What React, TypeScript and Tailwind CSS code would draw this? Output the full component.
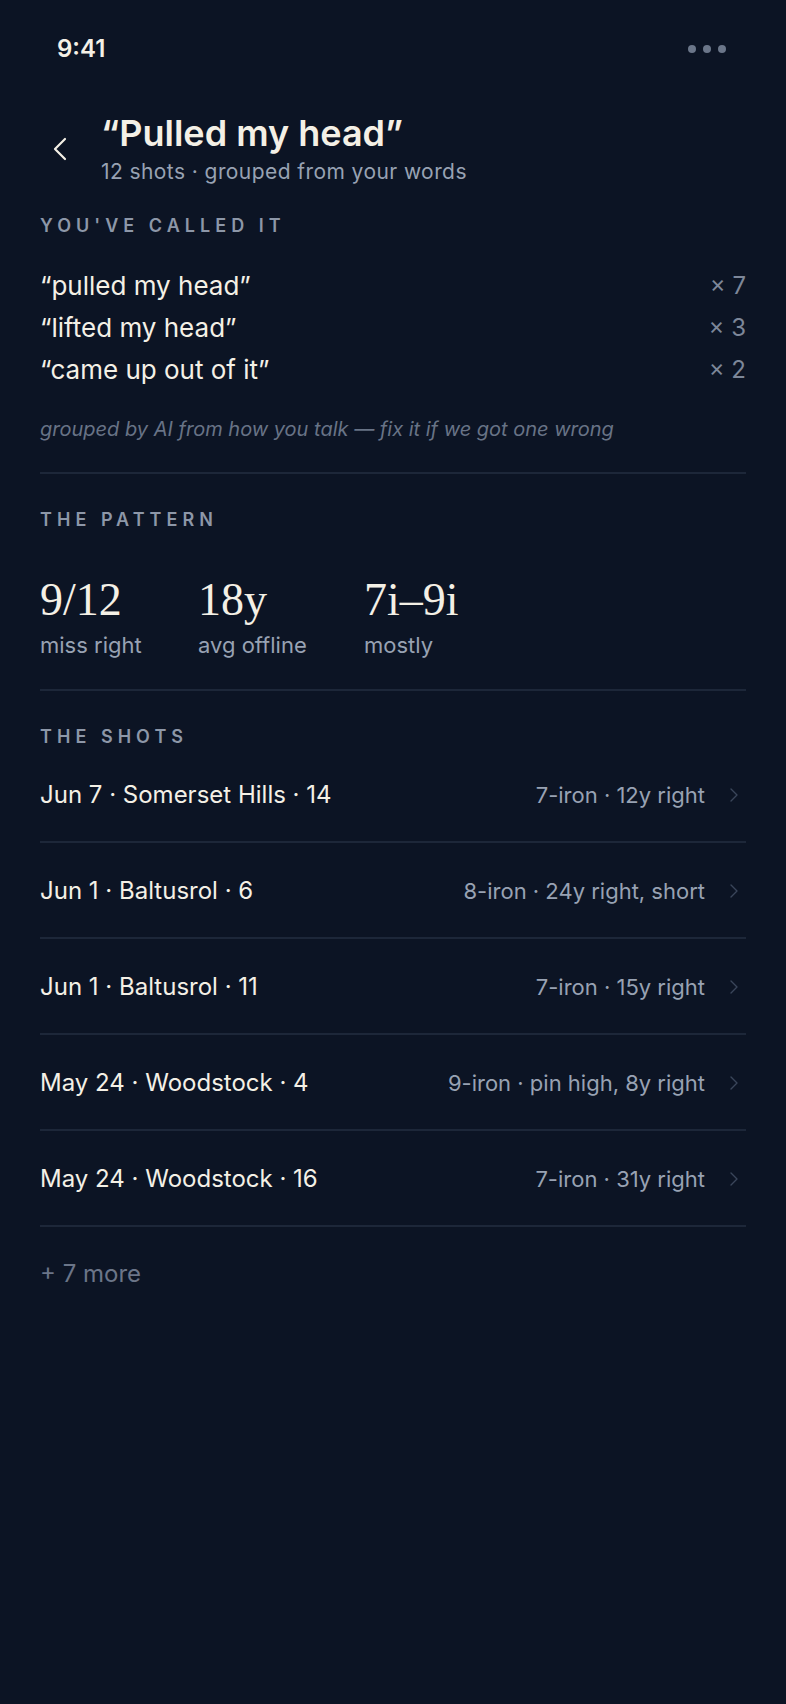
import React from "react";

const sans = "font-['Inter','Noto_Sans',sans-serif]";

const phrases = [
  { text: "“pulled my head”", count: "× 7" },
  { text: "“lifted my head”", count: "× 3" },
  { text: "“came up out of it”", count: "× 2" },
];

const stats = [
  { value: "9/12", label: "miss right", w: "w-[158px]" },
  { value: "18y", label: "avg offline", w: "w-[166px]" },
  { value: "7i–9i", label: "mostly", w: "" },
];

const shots = [
  { where: "Jun 7 · Somerset Hills · 14", what: "7-iron · 12y right" },
  { where: "Jun 1 · Baltusrol · 6", what: "8-iron · 24y right, short" },
  { where: "Jun 1 · Baltusrol · 11", what: "7-iron · 15y right" },
  { where: "May 24 · Woodstock · 4", what: "9-iron · pin high, 8y right" },
  { where: "May 24 · Woodstock · 16", what: "7-iron · 31y right" },
];

function SectionLabel({ children }: { children: React.ReactNode }) {
  return (
    <div className="text-[18px] font-semibold tracking-[0.28em] text-[#8d97a8] leading-none">
      {children}
    </div>
  );
}

function Chevron({ className }: { className?: string }) {
  return (
    <svg viewBox="0 0 8 14" className={className} fill="none">
      <path d="M1 1l6 6-6 6" stroke="currentColor" strokeWidth="1.4" strokeLinecap="round" strokeLinejoin="round" />
    </svg>
  );
}

export default function App() {
  return (
    <div className={`${sans} min-h-[1704px] w-full bg-[#0c1424] text-[#f4f0e6]`}>
      {/* status bar */}
      <div className="flex items-center justify-between pl-[57px] pr-[60px] pt-[36px] h-[62px]">
        <span className="text-[24px] font-semibold leading-none">9:41</span>
        <div className="flex items-center gap-[7px]">
          <span className="h-[8px] w-[8px] rounded-full bg-[#6b7689]" />
          <span className="h-[8px] w-[8px] rounded-full bg-[#6b7689]" />
          <span className="h-[8px] w-[8px] rounded-full bg-[#6b7689]" />
        </div>
      </div>

      {/* header */}
      <div className="flex items-center pl-[53px] pt-[51px]">
        <svg viewBox="0 0 14 24" className="h-[24px] w-[14px] text-[#f4f0e6]" fill="none">
          <path d="M12 2L2 12l10 10" stroke="currentColor" strokeWidth="2.2" strokeLinecap="round" strokeLinejoin="round" />
        </svg>
        <div className="ml-[34px]">
          <h1 className="text-[36px] font-semibold leading-[40px]">“Pulled my head”</h1>
          <p className="mt-[6px] text-[21px] tracking-[0.02em] leading-[26px] text-[#98a2b3]">
            12 shots · grouped from your words
          </p>
        </div>
      </div>

      <div className="px-[40px]">
        {/* phrases */}
        <div className="pt-[32px]">
          <SectionLabel>YOU'VE CALLED IT</SectionLabel>
          <div className="mt-[36px] flex flex-col gap-[12px]">
            {phrases.map((p) => (
              <div key={p.text} className="flex items-center justify-between text-[26px] leading-[30px]">
                <span>{p.text}</span>
                <span className="text-[24px] text-[#7d8799]">{p.count}</span>
              </div>
            ))}
          </div>
          <p className="mt-[32px] text-[20px] italic leading-[24px] text-[#687386]">
            grouped by AI from how you talk — fix it if we got one wrong
          </p>
        </div>

        <div className="mt-[31px] h-[2px] bg-[#1d2739]" />

        {/* pattern */}
        <div className="pt-[37px]">
          <SectionLabel>THE PATTERN</SectionLabel>
          <div className="mt-[46px] flex">
            {stats.map((s) => (
              <div key={s.label} className={s.w}>
                <div className="font-['Liberation_Serif','DejaVu_Serif',serif] text-[46px] leading-[50px]">
                  {s.value}
                </div>
                <div className="mt-[7px] text-[22px] leading-[26px] text-[#98a2b3]">{s.label}</div>
              </div>
            ))}
          </div>
        </div>

        <div className="mt-[31px] h-[2px] bg-[#1d2739]" />

        {/* shots */}
        <div className="pt-[37px]">
          <SectionLabel>THE SHOTS</SectionLabel>
          <div className="mt-[1px]">
            {shots.map((s) => (
              <div key={s.where} className="flex h-[96px] items-center justify-between border-b-2 border-[#1d2739] pt-[2px]">
                <span className="text-[24px] leading-[28px]">{s.where}</span>
                <div className="flex items-center">
                  <span className="text-[22px] leading-[28px] text-[#98a2b3]">{s.what}</span>
                  <Chevron className="ml-[25px] mr-[8px] h-[14px] w-[8px] text-[#3a465a]" />
                </div>
              </div>
            ))}
          </div>
          <div className="pt-[33px] text-[24px] leading-[28px] text-[#6b7588]">+ 7 more</div>
        </div>
      </div>
    </div>
  );
}
